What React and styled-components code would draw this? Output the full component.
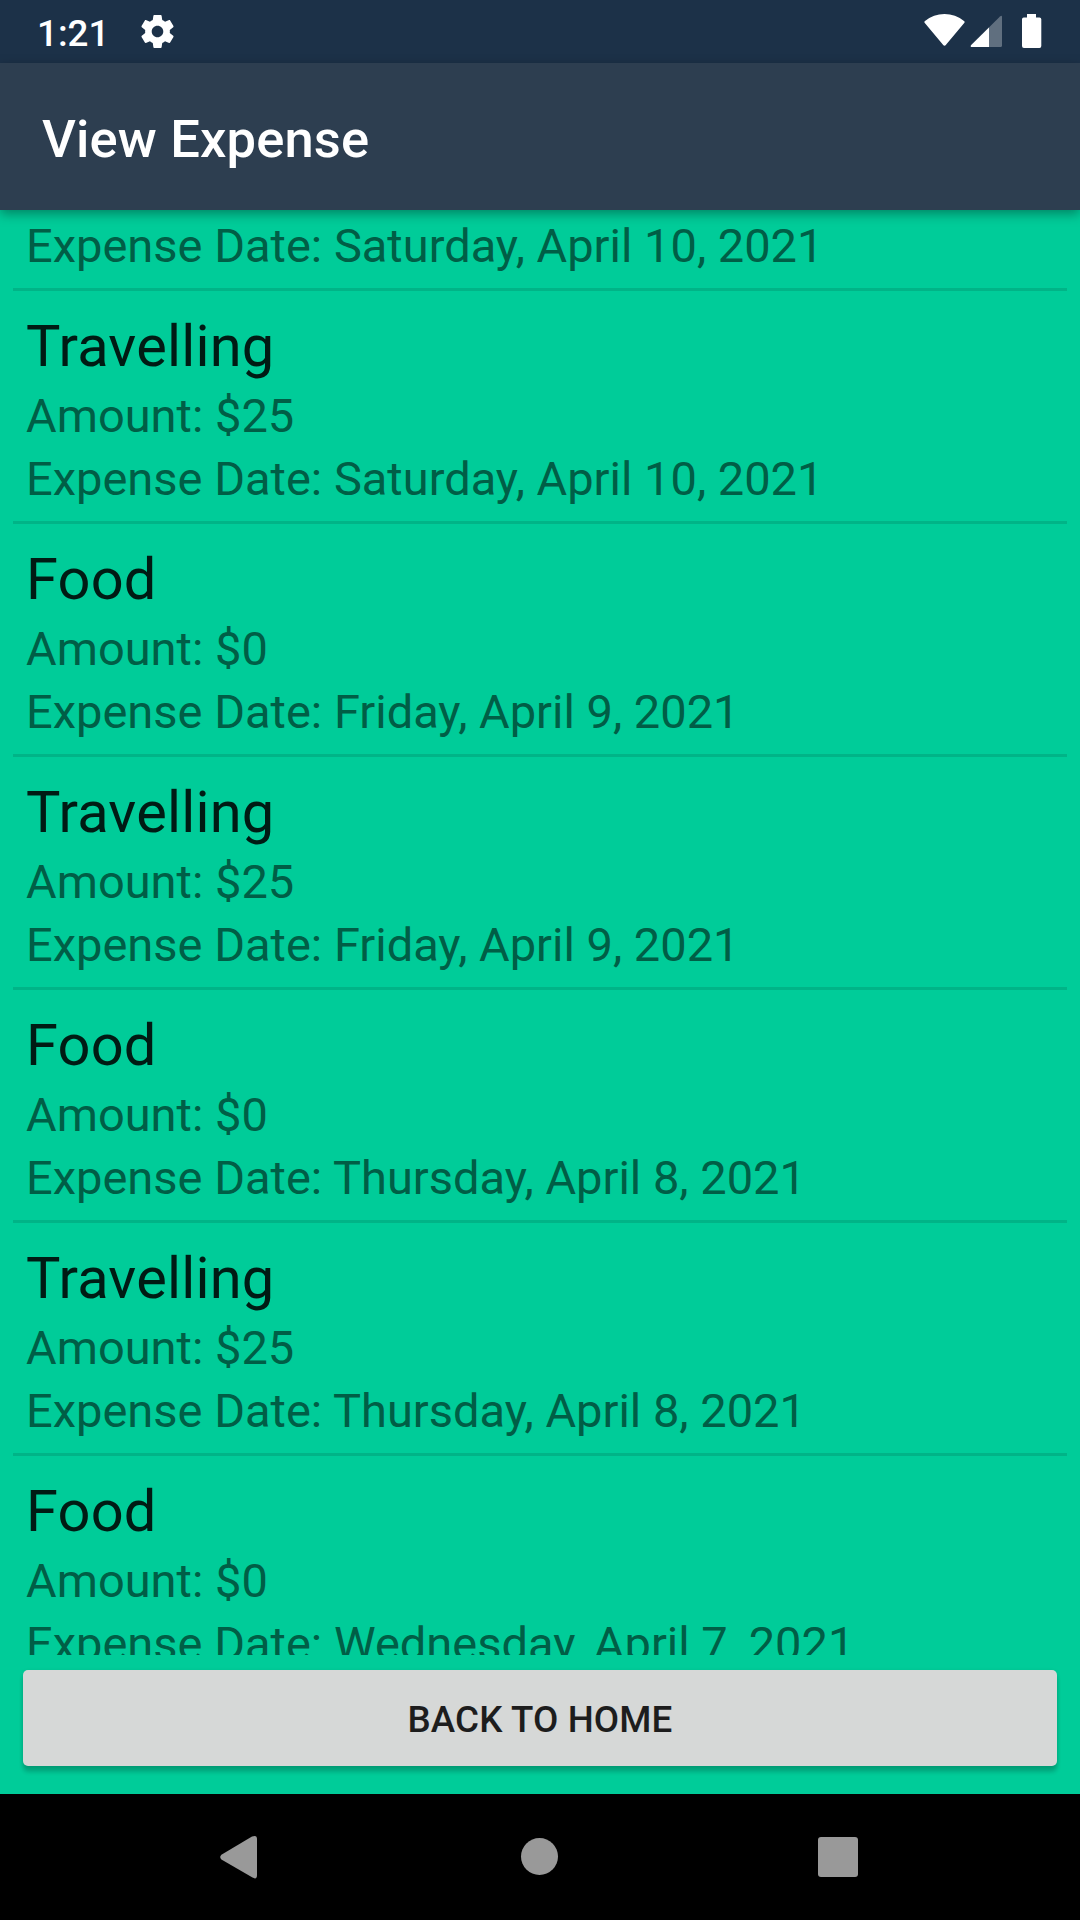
import React from "react";
import styled, { createGlobalStyle } from "styled-components";

const GlobalStyle = createGlobalStyle`
  *, *::before, *::after { box-sizing: border-box; }
  body { margin: 0; background: #000; }
`;

const Screen = styled.div`
  display: flex;
  flex-direction: column;
  width: 1080px;
  height: 1920px;
  overflow: hidden;
  background: #00cc99;
  font-family: Roboto, "Noto Sans", sans-serif;
`;

const StatusBar = styled.header`
  display: flex;
  align-items: center;
  flex: none;
  height: 63px;
  padding: 0 38px 0 37px;
  background: #1c3148;
  color: #fff;
`;

const Clock = styled.time`
  width: 103.5px;
  padding-top: 4px;
  font-size: 36.75px;
  line-height: 44px;
  font-weight: 500;
`;

const StatusIcons = styled.div`
  display: flex;
  align-items: center;
  margin-left: auto;
  padding-bottom: 1px;
`;

const Icon = styled.svg`
  display: block;
  flex: none;
  fill: ${(p) => p.$color || "#fff"};
`;

const AppBar = styled.div`
  display: flex;
  align-items: center;
  flex: none;
  height: 147px;
  padding: 4px 42px 0;
  background: #2d3e50;
  color: #fff;
  box-shadow: 0 4px 11px rgba(0, 0, 0, 0.35);
  z-index: 1;
`;

const Title = styled.h1`
  margin: 0;
  font-size: 52.5px;
  line-height: 62px;
  font-weight: 500;
  letter-spacing: 0.15px;
`;

const ListViewport = styled.main`
  flex: none;
  height: 1445px;
  padding: 0 13px;
  overflow: hidden;
`;

const ExpenseList = styled.ul`
  margin: 0;
  padding: 0;
  list-style: none;
`;

const ExpenseRow = styled.li`
  padding: ${(p) => (p.$continued ? 4 : 21)}px 13px 11px;
  border-bottom: 3px solid #00b487;
  white-space: nowrap;
`;

const Category = styled.h2`
  margin: 0 0 4px;
  font-size: 57.75px;
  line-height: 68px;
  font-weight: 400;
  letter-spacing: 0.2px;
  color: #001b14;
`;

const Detail = styled.p`
  margin: 0;
  font-size: 47px;
  line-height: 63px;
  color: #005e46;
`;

const Footer = styled.div`
  flex: 1;
  padding: 15px 23px 28px;
`;

const HomeButton = styled.button`
  display: block;
  width: 100%;
  height: 96px;
  padding: 3px 0 0;
  border: 0;
  border-radius: 5px;
  background: #d6d8d7;
  box-shadow: 0 6px 4px rgba(0, 0, 0, 0.19), 0 1px 4px rgba(0, 0, 0, 0.1);
  color: #1d1d1d;
  font: 500 36.75px/44px Roboto, "Noto Sans", sans-serif;
  letter-spacing: 0.12px;
`;

const NavBar = styled.nav`
  display: flex;
  align-items: center;
  justify-content: center;
  gap: 172px;
  flex: none;
  height: 126px;
  background: #000;
`;

const NavButton = styled.button`
  width: 126px;
  height: 126px;
  padding: 0;
  border: 0;
  background: none;
`;

const expenses = [
  { date: "Saturday, April 10, 2021" },
  { category: "Travelling", amount: 25, date: "Saturday, April 10, 2021" },
  { category: "Food", amount: 0, date: "Friday, April 9, 2021" },
  { category: "Travelling", amount: 25, date: "Friday, April 9, 2021" },
  { category: "Food", amount: 0, date: "Thursday, April 8, 2021" },
  { category: "Travelling", amount: 25, date: "Thursday, April 8, 2021" },
  { category: "Food", amount: 0, date: "Wednesday, April 7, 2021" },
];

const GearIcon = () => (
  <Icon width="33" height="33" viewBox="2 2 20 20">
    <path d="M19.43 12.98c.04-.32.07-.64.07-.98s-.03-.66-.07-.98l2.11-1.65c.19-.15.24-.42.12-.64l-2-3.46c-.12-.22-.39-.3-.61-.22l-2.49 1c-.52-.4-1.08-.73-1.69-.98l-.38-2.65C14.46 2.18 14.25 2 14 2h-4c-.25 0-.46.18-.49.42l-.38 2.65c-.61.25-1.17.59-1.69.98l-2.49-1c-.23-.09-.49 0-.61.22l-2 3.46c-.13.22-.07.49.12.64l2.11 1.65c-.04.32-.07.65-.07.98s.03.66.07.98l-2.11 1.65c-.19.15-.24.42-.12.64l2 3.46c.12.22.39.3.61.22l2.49-1c.52.4 1.08.73 1.69.98l.38 2.65c.03.24.24.42.49.42h4c.25 0 .46-.18.49-.42l.38-2.65c.61-.25 1.17-.59 1.69-.98l2.49 1c.23.09.49 0 .61-.22l2-3.46c.12-.22.07-.49-.12-.64l-2.11-1.65zM12 15.5c-1.93 0-3.500-1.570-3.500-3.500s1.570-3.500 3.500-3.500 3.500 1.570 3.500 3.500-1.570 3.500-3.500 3.500z" />
  </Icon>
);

const SystemIcons = () => (
  <Icon width="118" height="34" viewBox="0 0 118 34">
    <path d="M.8 9Q-.2 7.8 1 7Q9.500 0 20.500 0T40 7Q41.200 7.800 40.200 9L22 30.800Q20.500 32.500 19 30.800Z" />
    <path d="M47 31.200L76 2.400Q78 .9 78 3V31.500Q78 33 76.500 33H48Q46 33 47 31.200Z" opacity=".3" />
    <path d="M47 31.200L65 13.400V33H48Q46 33 47 31.200Z" />
    <path d="M103 0h9v3.500h3.500Q117.300 3.500 117.300 5.300V32Q117.300 34 115.500 34H100Q98 34 98 32V5.300Q98 3.500 99.800 3.500H103Z" />
  </Icon>
);

export default function App() {
  return (
    <>
      <GlobalStyle />
      <Screen>
        <StatusBar>
          <Clock>1:21</Clock>
          <GearIcon />
          <StatusIcons>
            <SystemIcons />
          </StatusIcons>
        </StatusBar>
        <AppBar>
          <Title>View Expense</Title>
        </AppBar>
        <ListViewport>
          <ExpenseList>
            {expenses.map((e, i) => (
              <ExpenseRow key={i} $continued={!e.category}>
                {e.category && (
                  <>
                    <Category>{e.category}</Category>
                    <Detail>Amount: ${e.amount}</Detail>
                  </>
                )}
                <Detail>Expense Date: {e.date}</Detail>
              </ExpenseRow>
            ))}
          </ExpenseList>
        </ListViewport>
        <Footer>
          <HomeButton type="button">BACK TO HOME</HomeButton>
        </Footer>
        <NavBar>
          <NavButton aria-label="Back">
            <Icon $color="#999" width="126" height="126" viewBox="0 0 126 126">
              <path d="M42.400 65.500Q40 63 42.400 60.700L73 42.600Q78 40.500 78 45V81Q78 86 73.500 83.600Z" />
            </Icon>
          </NavButton>
          <NavButton aria-label="Home">
            <Icon $color="#999" width="126" height="126" viewBox="0 0 126 126">
              <circle cx="62.500" cy="62.500" r="18.500" />
            </Icon>
          </NavButton>
          <NavButton aria-label="Recents">
            <Icon $color="#999" width="126" height="126" viewBox="0 0 126 126">
              <rect x="43" y="43" width="40" height="40" rx="3" />
            </Icon>
          </NavButton>
        </NavBar>
      </Screen>
    </>
  );
}
